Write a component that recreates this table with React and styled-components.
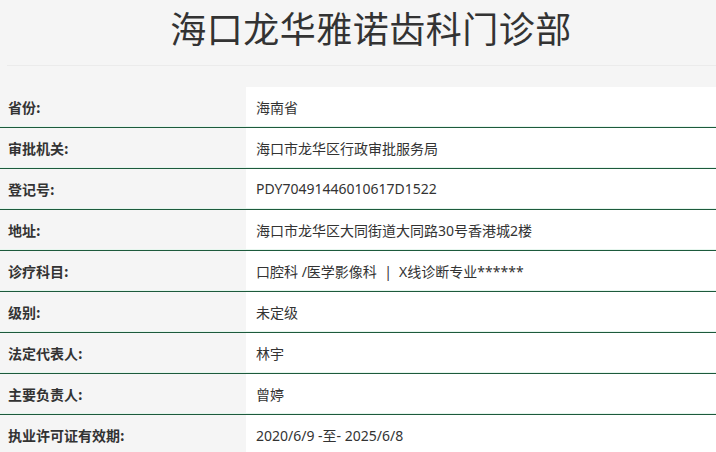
import React from "react";
import styled, { createGlobalStyle } from "styled-components";

const Global = createGlobalStyle`
  html, body { margin: 0; padding: 0; background: #f5f5f5; }
  body { font-family: "Noto Sans", "Noto Sans CJK SC", sans-serif; color: #333; }
`;

const Page = styled.div`
  width: 716px;
  overflow: hidden;
`;

const Header = styled.header`
  height: 65px;
  display: flex;
  align-items: flex-start;
  justify-content: center;
  padding: 9px 0 0 26px;
  box-sizing: border-box;
`;

const Title = styled.h1`
  margin: 0;
  font-family: "Noto Sans CJK SC", sans-serif;
  font-weight: 400;
  font-size: 36px;
  line-height: 1;
  color: #333;
  letter-spacing: 0.5px;
`;

const Divider = styled.div`
  height: 1px;
  margin-left: 7px;
  background: #ebebeb;
  margin-bottom: 21px;
`;

const Table = styled.div`
  display: flex;
  flex-direction: column;
`;

const Row = styled.div`
  display: grid;
  grid-template-columns: 246px 1fr;
  height: 41px;
  box-sizing: border-box;
  border-bottom: ${(p) => (p.$last ? "none" : "1px solid #1d5a3c")};
`;

const Label = styled.div`
  display: flex;
  align-items: center;
  padding-left: 8px;
  font-family: "Noto Sans CJK SC", sans-serif;
  font-weight: 700;
  font-size: 14px;
  color: #333;
  background: #f5f5f5;
  border-bottom: 1px solid #e6f6ee;
`;

const Value = styled.div`
  display: flex;
  align-items: center;
  padding-left: 10px;
  font-family: "Noto Sans", "Noto Sans CJK SC", sans-serif;
  font-size: 14px;
  color: #333;
  background: #fff;
  border-bottom: 1px solid #e6f6ee;
  white-space: pre;
`;

const rows = [
  ["省份:", "海南省"],
  ["审批机关:", "海口市龙华区行政审批服务局"],
  ["登记号:", "PDY70491446010617D1522"],
  ["地址:", "海口市龙华区大同街道大同路30号香港城2楼"],
  ["诊疗科目:", "口腔科 /医学影像科  |  X线诊断专业******"],
  ["级别:", "未定级"],
  ["法定代表人:", "林宇"],
  ["主要负责人:", "曾婷"],
  ["执业许可证有效期:", "2020/6/9 -至- 2025/6/8"],
];

export default function App() {
  return (
    <Page>
      <Global />
      <Header>
        <Title>海口龙华雅诺齿科门诊部</Title>
      </Header>
      <Divider />
      <Table>
        {rows.map(([l, v], i) => (
          <Row key={l} $last={i === rows.length - 1}>
            <Label>{l}</Label>
            <Value>{v}</Value>
          </Row>
        ))}
      </Table>
    </Page>
  );
}
